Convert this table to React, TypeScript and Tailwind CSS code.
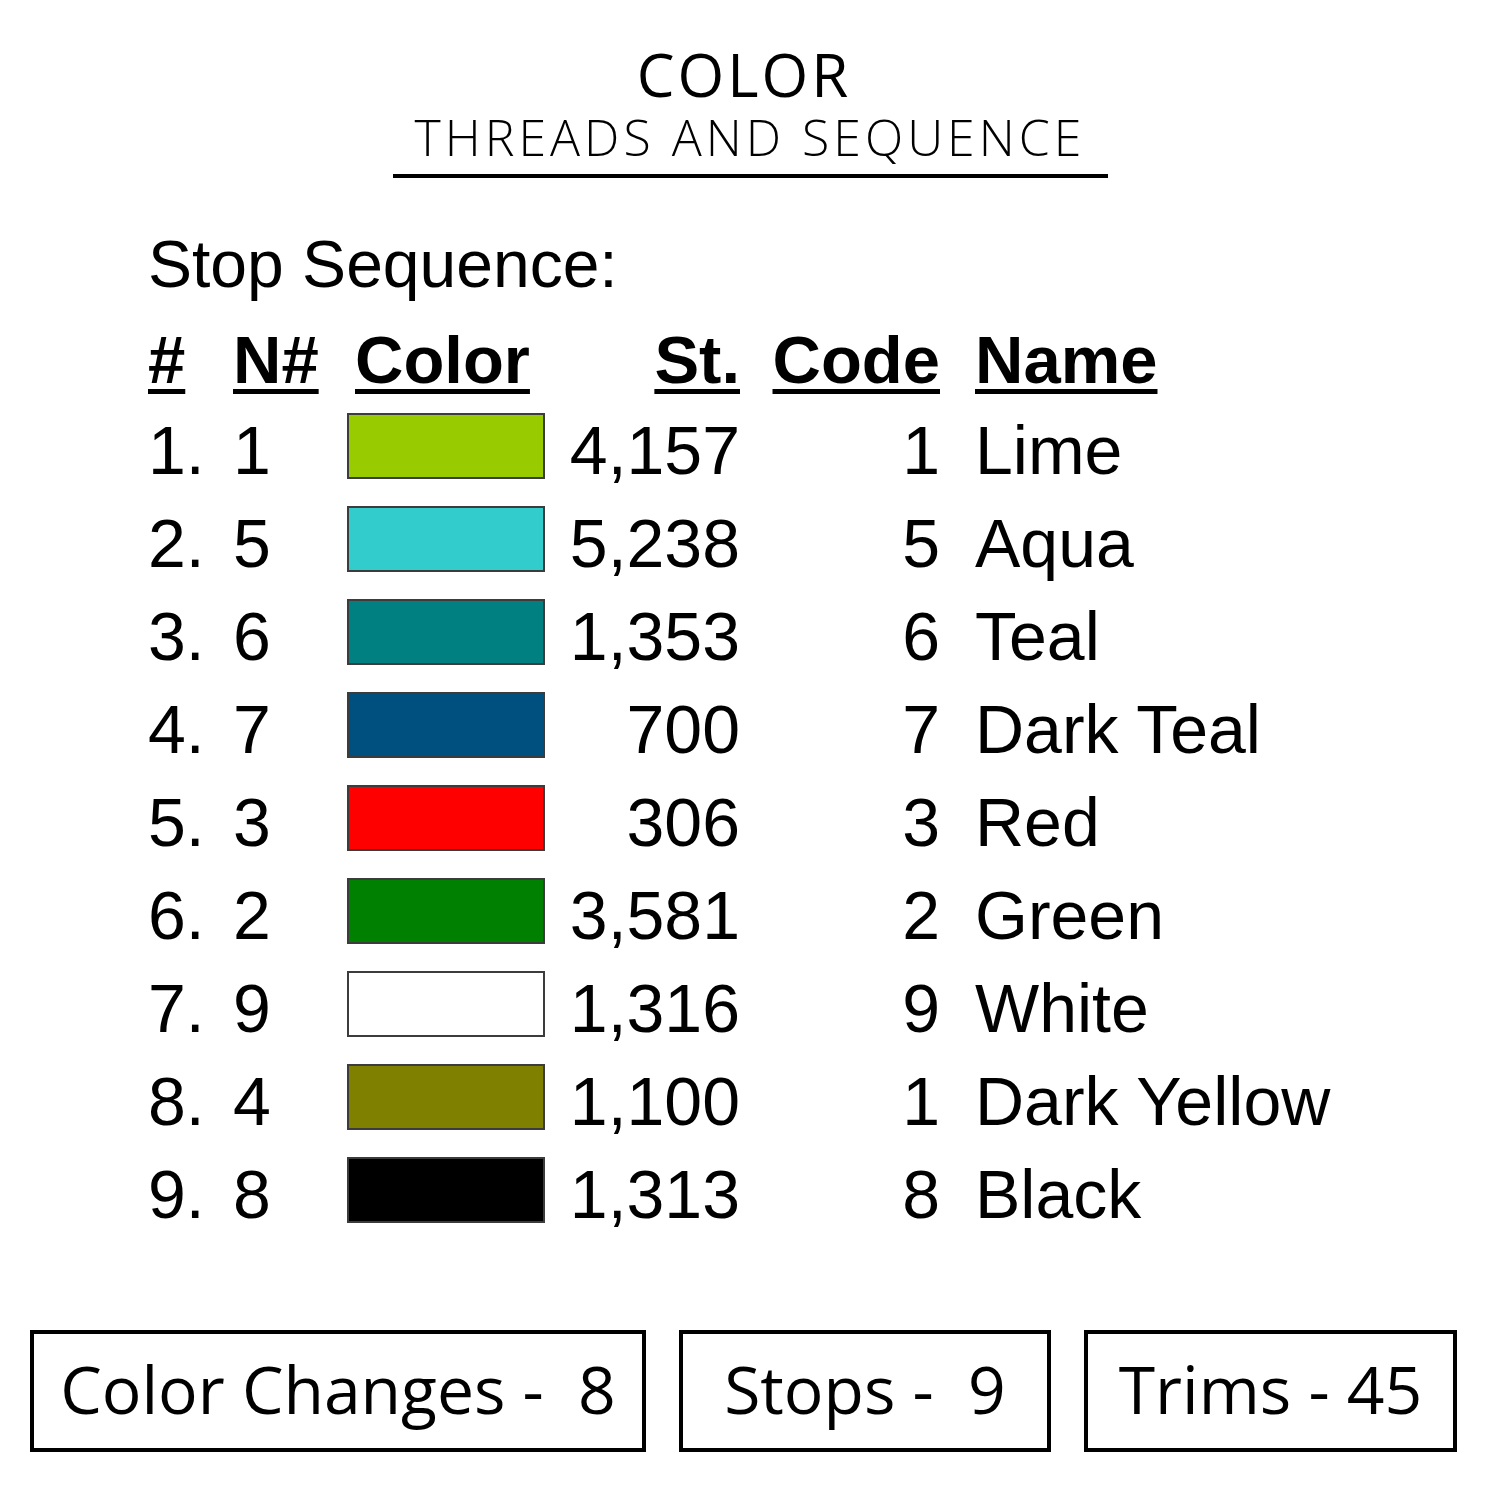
const rows = [
  { n: "1.", nn: "1", color: "bg-[#99cc00]", st: "4,157", code: "1", name: "Lime" },
  { n: "2.", nn: "5", color: "bg-[#33cccc]", st: "5,238", code: "5", name: "Aqua" },
  { n: "3.", nn: "6", color: "bg-[#008080]", st: "1,353", code: "6", name: "Teal" },
  { n: "4.", nn: "7", color: "bg-[#00507f]", st: "700", code: "7", name: "Dark Teal" },
  { n: "5.", nn: "3", color: "bg-[#ff0000]", st: "306", code: "3", name: "Red" },
  { n: "6.", nn: "2", color: "bg-[#008000]", st: "3,581", code: "2", name: "Green" },
  { n: "7.", nn: "9", color: "bg-white", st: "1,316", code: "9", name: "White" },
  { n: "8.", nn: "4", color: "bg-[#808000]", st: "1,100", code: "1", name: "Dark Yellow" },
  { n: "9.", nn: "8", color: "bg-black", st: "1,313", code: "8", name: "Black" },
];

const cols = "grid grid-cols-[85px_114px_198px_195px_200px_1fr]";
const head = "underline decoration-[5px] underline-offset-[6px]";

function StatBox({ label, width }: { label: string; width: string }) {
  return (
    <div className={`${width} h-[122px] border-4 border-black flex items-center justify-center pb-[7px]`}>
      <span className="whitespace-pre text-[66px] leading-none text-black font-['Open_Sans',sans-serif]">
        {label}
      </span>
    </div>
  );
}

export default function App() {
  return (
    <div className="w-[1500px] h-[1500px] bg-white text-black pt-[44px]">
      {/* Title */}
      <div className="flex flex-col items-center font-['Open_Sans',sans-serif]">
        <h1 className="text-[60px] leading-none font-medium tracking-[3px] -translate-x-[6px]">COLOR</h1>
        <h2 className="mt-[8px] text-[50px] leading-none font-[350] tracking-[4px]">
          THREADS AND SEQUENCE
        </h2>
        <div className="mt-[12px] w-[715px] h-[4px] bg-black" />
      </div>

      {/* Stop sequence table */}
      <div className="pl-[148px] font-['Liberation_Sans',Arial,sans-serif]">
        <p className="mt-[53px] text-[66px] leading-none">Stop Sequence:</p>

        <div className={`${cols} mt-[29px] text-[67px] leading-none font-bold`}>
          <span className={head}>#</span>
          <span className={head}>N#</span>
          <span className={`${head} pl-[8px]`}>Color</span>
          <span className={`${head} text-right`}>St.</span>
          <span className={`${head} text-right`}>Code</span>
          <span className={`${head} pl-[35px]`}>Name</span>
        </div>

        <div className="mt-[10px]">
          {rows.map((r) => (
            <div key={r.n} className={`${cols} h-[93px] items-center text-[68px] leading-none`}>
              <span>{r.n}</span>
              <span>{r.nn}</span>
              <div className={`w-[198px] h-[66px] mb-[8px] border-2 border-[#3c3c3c] ${r.color}`} />
              <span className="text-right">{r.st}</span>
              <span className="text-right">{r.code}</span>
              <span className="pl-[35px]">{r.name}</span>
            </div>
          ))}
        </div>
      </div>

      {/* Summary boxes */}
      <div className="mt-[90px] ml-[30px] w-[1427px] flex justify-between">
        <StatBox label="Color Changes -  8" width="w-[616px]" />
        <StatBox label="Stops -  9" width="w-[372px]" />
        <StatBox label="Trims - 45" width="w-[373px]" />
      </div>
    </div>
  );
}
